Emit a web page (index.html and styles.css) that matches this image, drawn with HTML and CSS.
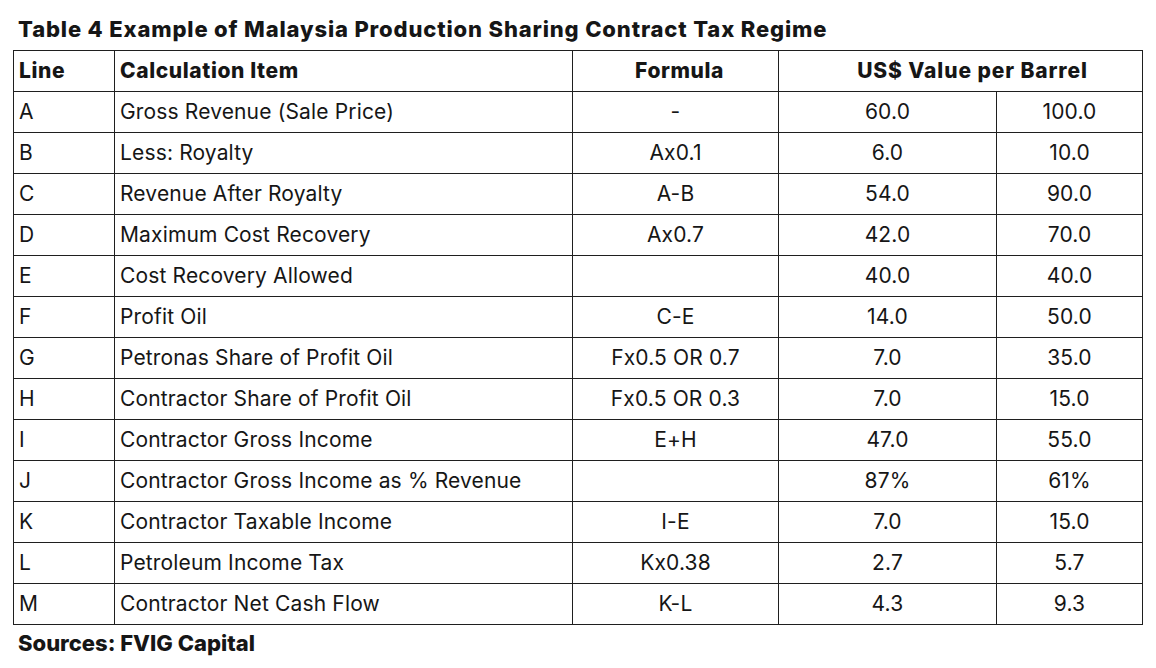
FILE: index.html
```html
<!DOCTYPE html>
<html>
<head>
<meta charset="utf-8">
<link rel="stylesheet" href="styles.css">
</head>
<body>
<div class="page">
  <h1 class="title">Table 4 Example of Malaysia Production Sharing Contract Tax Regime</h1>
  <table class="psc">
    <colgroup>
      <col class="c-line"><col class="c-item"><col class="c-formula"><col class="c-v1"><col class="c-v2">
    </colgroup>
    <thead>
      <tr><th class="left">Line</th><th class="left">Calculation Item</th><th class="h-formula">Formula</th><th class="h-value" colspan="2">US$ Value per Barrel</th></tr>
    </thead>
    <tbody>
      <tr><td class="left">A</td><td class="left">Gross Revenue (Sale Price)</td><td>-</td><td>60.0</td><td>100.0</td></tr>
      <tr><td class="left">B</td><td class="left">Less: Royalty</td><td>Ax0.1</td><td>6.0</td><td>10.0</td></tr>
      <tr><td class="left">C</td><td class="left">Revenue After Royalty</td><td>A-B</td><td>54.0</td><td>90.0</td></tr>
      <tr><td class="left">D</td><td class="left">Maximum Cost Recovery</td><td>Ax0.7</td><td>42.0</td><td>70.0</td></tr>
      <tr><td class="left">E</td><td class="left">Cost Recovery Allowed</td><td></td><td>40.0</td><td>40.0</td></tr>
      <tr><td class="left">F</td><td class="left">Profit Oil</td><td>C-E</td><td>14.0</td><td>50.0</td></tr>
      <tr><td class="left">G</td><td class="left">Petronas Share of Profit Oil</td><td>Fx0.5 OR 0.7</td><td>7.0</td><td>35.0</td></tr>
      <tr><td class="left">H</td><td class="left">Contractor Share of Profit Oil</td><td>Fx0.5 OR 0.3</td><td>7.0</td><td>15.0</td></tr>
      <tr><td class="left">I</td><td class="left">Contractor Gross Income</td><td>E+H</td><td>47.0</td><td>55.0</td></tr>
      <tr><td class="left">J</td><td class="left">Contractor Gross Income as % Revenue</td><td></td><td>87%</td><td>61%</td></tr>
      <tr><td class="left">K</td><td class="left">Contractor Taxable Income</td><td>I-E</td><td>7.0</td><td>15.0</td></tr>
      <tr><td class="left">L</td><td class="left">Petroleum Income Tax</td><td>Kx0.38</td><td>2.7</td><td>5.7</td></tr>
      <tr><td class="left">M</td><td class="left">Contractor Net Cash Flow</td><td>K-L</td><td>4.3</td><td>9.3</td></tr>
    </tbody>
  </table>
  <p class="source">Sources: FVIG Capital</p>
</div>
</body>
</html>
```

FILE: styles.css
```css
html, body {
  margin: 0;
  padding: 0;
  background: #ffffff;
}
body {
  font-family: Inter, "Liberation Sans", sans-serif;
  color: #161616;
}
.page {
  padding: 16px 0 0 13px;
}
.title {
  margin: 0 0 0 5px;
  font-size: 22px;
  font-weight: 800;
  letter-spacing: 0.85px;
  line-height: 26px;
  height: 34px;
}
.psc {
  border-collapse: collapse;
  table-layout: fixed;
  width: 1129px;
  font-size: 21px;
}
.c-line { width: 101px; }
.c-item { width: 458px; }
.c-formula { width: 206px; }
.c-v1 { width: 218px; }
.c-v2 { width: 146px; }
.psc th, .psc td {
  border: 1.5px solid #1f1f1f;
  height: 40px;
  padding: 0 5px;
  text-align: center;
  vertical-align: middle;
  line-height: 24px;
  font-weight: 400;
  letter-spacing: 0.15px;
}
.psc th {
  font-weight: 800;
  letter-spacing: 0.6px;
}
.psc .h-formula {
  padding-left: 13px;
}
.psc .h-value {
  padding-left: 29px;
  letter-spacing: 0.9px;
}
.psc .left {
  text-align: left;
}
.source {
  margin: 5px 0 0 5px;
  font-size: 22px;
  font-weight: 800;
  line-height: 26px;
}
```
